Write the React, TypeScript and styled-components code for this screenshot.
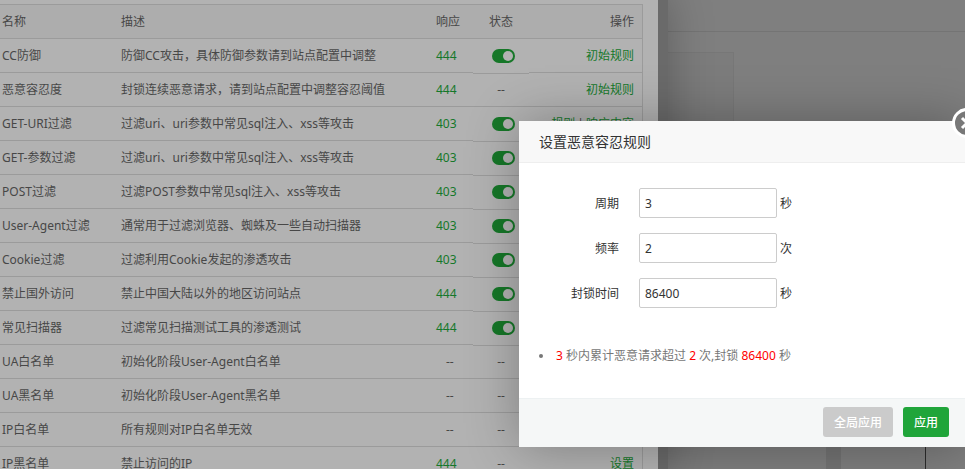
import React, { useState } from "react";
import styled, { createGlobalStyle } from "styled-components";

const font = '"Noto Sans", "Noto Sans CJK SC", sans-serif';

const GlobalStyle = createGlobalStyle`
  * { box-sizing: border-box; }
  body { margin: 0; font: 12px/18px ${font}; color: #474747; background: #7f7f7f; }
  button, input { font: inherit; }
`;

const Screen = styled.div`
  position: relative;
  display: flex;
  height: 100vh;
  overflow: hidden;
`;

const RulesPanel = styled.section`
  position: relative;
  z-index: 1;
  flex: 0 0 658px;
  padding: 4px 15px 0 0;
  background: #b2b2b2;
  box-shadow: 0 0 0 10px #6a6a6a, 0 0 45px 6px rgba(0, 0, 0, 0.3);
`;

const RulesTable = styled.table`
  width: 100%;
  table-layout: fixed;
  border-collapse: separate;
  border-spacing: 0;
  border: 1px solid #9b9b9b;
  border-width: 1px 1px 0 0;
`;

const HeadCell = styled.th<{ $align?: string; $width?: number }>`
  width: ${(p) => (p.$width ? `${p.$width}px` : "auto")};
  height: 34px;
  padding: 0 8px;
  border-bottom: 1px solid #9b9b9b;
  background: #adadad;
  font-weight: 400;
  text-align: ${(p) => p.$align ?? "left"};
  white-space: nowrap;
  &:first-child { padding-left: 2px; }
`;

const Cell = styled.td<{ $align?: string; $lowLine?: boolean }>`
  height: 34px;
  padding: 0 8px;
  border-bottom: 1px solid ${(p) => (p.$lowLine ? "transparent" : "#9b9b9b")};
  box-shadow: ${(p) => (p.$lowLine ? "0 1px 0 #9b9b9b" : "none")};
  text-align: ${(p) => p.$align ?? "left"};
  white-space: nowrap;
  &:first-child { padding-left: 2px; }
`;

const GreenLink = styled.a`
  color: #15782a;
  text-decoration: none;
`;

const Divider = styled.span`
  margin: 0 2px;
`;

const Blank = styled.span`
  margin-left: 10px;
`;

const Switch = styled.input`
  appearance: none;
  display: block;
  width: 23px;
  height: 14px;
  margin: 0 0 0 11px;
  border-radius: 7px;
  background: #9b9b9b;
  &::before {
    content: "";
    display: block;
    width: 10px;
    height: 10px;
    margin: 2px;
    border-radius: 50%;
    background: #b2b2b2;
  }
  &:checked { background: #167728; }
  &:checked::before { margin-left: 11px; }
`;

const Backdrop = styled.main`
  flex: 1;
  display: flex;
  flex-direction: column;
  min-width: 0;
`;

const TopStrip = styled.div`
  height: 32px;
  border-bottom: 1px solid #747474;
`;

const SideCard = styled.div`
  width: 76px;
  height: 200px;
  margin-top: 20px;
  border: 1px solid #777;
  background: #7c7c7c;
`;

const LowerRow = styled.div`
  display: flex;
  justify-content: flex-end;
  height: 90px;
  margin-top: auto;
`;

const Scroller = styled.div`
  width: 15px;
  background: #747474;
`;

const Editor = styled.div`
  width: 85px;
  margin-right: 39px;
  border-right: 1px solid #2c2c2c;
`;

const Dialog = styled.section`
  position: absolute;
  z-index: 2;
  top: 121px;
  right: 0;
  width: 446px;
  background: #fff;
  color: #333;
  box-shadow: 1px 1px 50px rgba(0, 0, 0, 0.3);
`;

const DialogTitle = styled.h2`
  margin: 0;
  padding: 0 20px;
  border-bottom: 1px solid #eee;
  background: #f8f8f8;
  font-size: 14px;
  font-weight: 400;
  line-height: 41px;
`;

const CloseButton = styled.button`
  position: absolute;
  top: -13px;
  right: -17px;
  width: 30px;
  height: 30px;
  padding: 0;
  border: 3px solid #fff;
  border-radius: 50%;
  background: #787878;
  svg { display: block; }
`;

const Fields = styled.div`
  display: grid;
  gap: 15px;
  padding: 25px 0 39px;
`;

const Field = styled.label`
  display: flex;
  align-items: center;
`;

const FieldText = styled.span`
  padding-top: 2px;
`;

const FieldName = styled(FieldText)`
  width: 100px;
  margin-right: 20px;
  text-align: right;
`;

const TextBox = styled.input`
  width: 138px;
  height: 30px;
  margin-right: 3px;
  padding: 0 5px;
  border: 1px solid #ccc;
  border-radius: 2px;
  background: #fff;
  color: #333;
  outline: none;
`;

const Notes = styled.ul`
  display: grid;
  margin: 0;
  padding: 0 20px 33px;
  color: #777;
  list-style: none;
`;

const Note = styled.li`
  display: flex;
  align-items: center;
  gap: 13px;
  &::before {
    content: "";
    width: 4px;
    height: 4px;
    border-radius: 50%;
    background: #777;
  }
`;

const Value = styled.span`
  color: #f00;
`;

const DialogFooter = styled.footer`
  display: flex;
  justify-content: flex-end;
  gap: 10px;
  padding: 8px 16px 10px;
  border-top: 1px solid #edf1f2;
  background: #f5f7f7;
`;

const ActionButton = styled.button<{ $primary?: boolean }>`
  height: 30px;
  padding: 2px 11px 0;
  border: 0;
  border-radius: 3px;
  background: ${(p) => (p.$primary ? "#20a53a" : "#cbcbcb")};
  color: #fff;
  font-weight: 500;
`;

type Rule = { name: string; text: string; code?: string; on?: boolean; actions: string[] };

const edit = ["规则", "响应内容"];

const rules: Rule[] = [
  { name: "CC防御", text: "防御CC攻击，具体防御参数请到站点配置中调整", code: "444", on: true, actions: ["初始规则"] },
  { name: "恶意容忍度", text: "封锁连续恶意请求，请到站点配置中调整容忍阈值", code: "444", actions: ["初始规则"] },
  { name: "GET-URI过滤", text: "过滤uri、uri参数中常见sql注入、xss等攻击", code: "403", on: true, actions: edit },
  { name: "GET-参数过滤", text: "过滤uri、uri参数中常见sql注入、xss等攻击", code: "403", on: true, actions: [] },
  { name: "POST过滤", text: "过滤POST参数中常见sql注入、xss等攻击", code: "403", on: true, actions: [] },
  { name: "User-Agent过滤", text: "通常用于过滤浏览器、蜘蛛及一些自动扫描器", code: "403", on: true, actions: [] },
  { name: "Cookie过滤", text: "过滤利用Cookie发起的渗透攻击", code: "403", on: true, actions: [] },
  { name: "禁止国外访问", text: "禁止中国大陆以外的地区访问站点", code: "444", on: true, actions: [] },
  { name: "常见扫描器", text: "过滤常见扫描测试工具的渗透测试", code: "444", on: true, actions: [] },
  { name: "UA白名单", text: "初始化阶段User-Agent白名单", actions: [] },
  { name: "UA黑名单", text: "初始化阶段User-Agent黑名单", actions: [] },
  { name: "IP白名单", text: "所有规则对IP白名单无效", actions: [] },
  { name: "IP黑名单", text: "禁止访问的IP", code: "444", actions: ["设置"] },
];

function RuleRow({ rule }: { rule: Rule }) {
  return (
    <tr>
      <Cell>{rule.name}</Cell>
      <Cell>{rule.text}</Cell>
      <Cell>{rule.code ? <GreenLink href="#">{rule.code}</GreenLink> : <Blank>--</Blank>}</Cell>
      <Cell $align="center" $lowLine={rule.on}>
        {rule.on ? <Switch type="checkbox" defaultChecked aria-label={rule.name} /> : "--"}
      </Cell>
      <Cell $align="right">
        {rule.actions.map((action, i) => (
          <React.Fragment key={action}>
            {i > 0 && <Divider>|</Divider>}
            <GreenLink href="#">{action}</GreenLink>
          </React.Fragment>
        ))}
      </Cell>
    </tr>
  );
}

type NumberFieldProps = { name: string; unit: string; value: string; onChange: (value: string) => void };

function NumberField({ name, unit, value, onChange }: NumberFieldProps) {
  return (
    <Field>
      <FieldName>{name}</FieldName>
      <TextBox value={value} onChange={(e) => onChange(e.target.value)} />
      <FieldText>{unit}</FieldText>
    </Field>
  );
}

export default function App() {
  const [cycle, setCycle] = useState("3");
  const [count, setCount] = useState("2");
  const [seconds, setSeconds] = useState("86400");
  return (
    <>
      <GlobalStyle />
      <Screen>
        <RulesPanel>
          <RulesTable>
            <thead>
              <tr>
                <HeadCell $width={113}>名称</HeadCell>
                <HeadCell>描述</HeadCell>
                <HeadCell $width={45}>响应</HeadCell>
                <HeadCell $width={56} $align="center">状态</HeadCell>
                <HeadCell $width={113} $align="right">操作</HeadCell>
              </tr>
            </thead>
            <tbody>
              {rules.map((rule) => <RuleRow key={rule.name} rule={rule} />)}
            </tbody>
          </RulesTable>
        </RulesPanel>
        <Backdrop>
          <TopStrip />
          <SideCard />
          <LowerRow>
            <Scroller />
            <Editor />
          </LowerRow>
        </Backdrop>
        <Dialog role="dialog" aria-labelledby="dialog-title">
          <DialogTitle id="dialog-title">设置恶意容忍规则</DialogTitle>
          <CloseButton aria-label="关闭">
            <svg width="24" height="24" viewBox="0 0 24 24" fill="none" stroke="#fff" strokeWidth="3">
              <path d="M7 7 17 17M17 7 7 17" />
            </svg>
          </CloseButton>
          <Fields>
            <NumberField name="周期" unit="秒" value={cycle} onChange={setCycle} />
            <NumberField name="频率" unit="次" value={count} onChange={setCount} />
            <NumberField name="封锁时间" unit="秒" value={seconds} onChange={setSeconds} />
          </Fields>
          <Notes>
            <Note>
              <span>
                <Value>{cycle}</Value> 秒内累计恶意请求超过 <Value>{count}</Value> 次,封锁 <Value>{seconds}</Value> 秒
              </span>
            </Note>
          </Notes>
          <DialogFooter>
            <ActionButton>全局应用</ActionButton>
            <ActionButton $primary>应用</ActionButton>
          </DialogFooter>
        </Dialog>
      </Screen>
    </>
  );
}
